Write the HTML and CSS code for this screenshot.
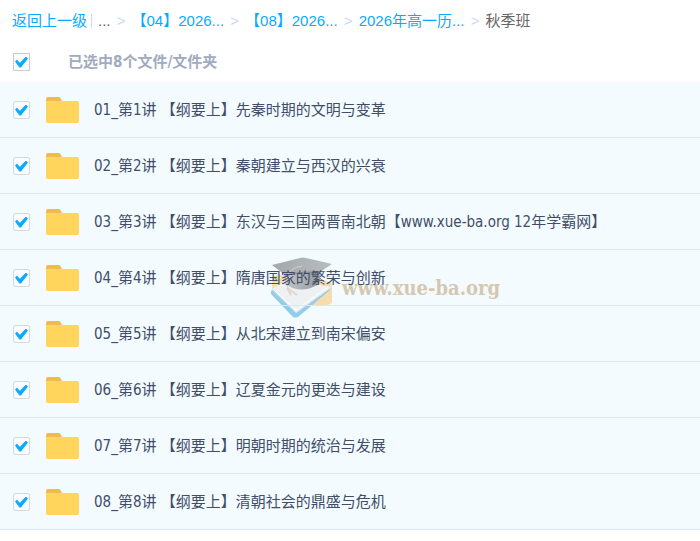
FILE: index.html
```
<!DOCTYPE html>
<html lang="zh-CN">
<head>
    <meta charset="UTF-8">
    <meta name="viewport" content="width=device-width, initial-scale=1.0">
    <title>秋季班</title>
    <link rel="stylesheet" href="styles.css">
</head>
<body>
    <nav class="breadcrumb">
        <a href="#">返回上一级</a>
        <span class="divider"></span>
        <span class="dots">...</span>
        <span class="sep">&gt;</span>
        <a href="#">【04】2026...</a>
        <span class="sep">&gt;</span>
        <a href="#">【08】2026...</a>
        <span class="sep">&gt;</span>
        <a href="#">2026年高一历...</a>
        <span class="sep">&gt;</span>
        <span class="current">秋季班</span>
    </nav>

    <div class="list-header">
        <input type="checkbox" class="check" id="checkAll" checked>
        <label for="checkAll">已选中8个文件/文件夹</label>
    </div>

    <!-- folder shape shared by all rows -->
    <svg class="sprite" width="0" height="0" aria-hidden="true">
        <symbol id="folder" viewBox="0 0 33 26">
            <path d="M0 7V2Q0 0 2 0H12.500Q14 0 14.700 1.500L16 4V8H0Z" fill="#edbd4b"/>
            <path d="M0 4H31Q33 4 33 6V24Q33 26 31 26H2Q0 26 0 24Z" fill="#ffd55b"/>
        </symbol>
    </svg>

    <div class="list-wrap">
        <ul class="file-list">
            <li class="row">
                <input type="checkbox" class="check" id="f1" checked>
                <svg class="folder" aria-hidden="true"><use href="#folder"/></svg>
                <label for="f1">01_第1讲 【纲要上】先秦时期的文明与变革</label>
            </li>
            <li class="row">
                <input type="checkbox" class="check" id="f2" checked>
                <svg class="folder" aria-hidden="true"><use href="#folder"/></svg>
                <label for="f2">02_第2讲 【纲要上】秦朝建立与西汉的兴衰</label>
            </li>
            <li class="row">
                <input type="checkbox" class="check" id="f3" checked>
                <svg class="folder" aria-hidden="true"><use href="#folder"/></svg>
                <label for="f3">03_第3讲 【纲要上】东汉与三国两晋南北朝【www.xue-ba.org 12年学霸网】</label>
            </li>
            <li class="row">
                <input type="checkbox" class="check" id="f4" checked>
                <svg class="folder" aria-hidden="true"><use href="#folder"/></svg>
                <label for="f4">04_第4讲 【纲要上】隋唐国家的繁荣与创新</label>
            </li>
            <li class="row">
                <input type="checkbox" class="check" id="f5" checked>
                <svg class="folder" aria-hidden="true"><use href="#folder"/></svg>
                <label for="f5">05_第5讲 【纲要上】从北宋建立到南宋偏安</label>
            </li>
            <li class="row">
                <input type="checkbox" class="check" id="f6" checked>
                <svg class="folder" aria-hidden="true"><use href="#folder"/></svg>
                <label for="f6">06_第6讲 【纲要上】辽夏金元的更迭与建设</label>
            </li>
            <li class="row">
                <input type="checkbox" class="check" id="f7" checked>
                <svg class="folder" aria-hidden="true"><use href="#folder"/></svg>
                <label for="f7">07_第7讲 【纲要上】明朝时期的统治与发展</label>
            </li>
            <li class="row">
                <input type="checkbox" class="check" id="f8" checked>
                <svg class="folder" aria-hidden="true"><use href="#folder"/></svg>
                <label for="f8">08_第8讲 【纲要上】清朝社会的鼎盛与危机</label>
            </li>
        </ul>

        <div class="watermark">
            <svg width="62" height="62" viewBox="0 0 62 62" aria-hidden="true">
                <defs>
                    <linearGradient id="cap" x1="0" y1="0" x2="1" y2="0">
                        <stop offset="0" stop-color="#a4a8ab"/>
                        <stop offset="1" stop-color="#b9bcbf"/>
                    </linearGradient>
                    <linearGradient id="band" x1="0" y1="0" x2="1" y2="0">
                        <stop offset="0" stop-color="#c6c9cb"/>
                        <stop offset="1" stop-color="#95999e"/>
                    </linearGradient>
                </defs>
                <!-- orange book -->
                <path d="M1 22Q2 18 8 18L50 22L60 26Q61 27 61 29V45Q60 48 54 48H36L1 32Z" fill="#f6dcae"/>
                <!-- open book with blue cover -->
                <path d="M0 34L14 26L59 33L27 60Q25 61 22 60L0 37Z" fill="#8fcdec"/>
                <path d="M1 32L15 23L61 30L25 56Z" fill="#eef1f3"/>
                <path d="M1 33L25 56L60 31" fill="none" stroke="#cfd5d9"/>
                <path d="M4 34L25 53L57 30" fill="none" stroke="#fff"/>
                <!-- cap -->
                <path d="M12 13L14 27Q30 38 48 27L49 12Z" fill="url(#band)"/>
                <path d="M1 8L29 1Q32 0 35 1L61 7L49 15Q32 14 14 18Z" fill="url(#cap)"/>
                <path d="M14 18Q32 14 49 15" fill="none" stroke="#7f858a"/>
                <path d="M31 9Q18 11 16 20Q14 28 19 34" fill="none" stroke="#d5d1c4"/>
                <path d="M18 32L26 38M16 31L20 38" stroke="#ddd9cb" stroke-width="2"/>
            </svg>
            <span>www.xue-ba.org</span>
        </div>
    </div>
</body>
</html>
```
FILE: styles.css
```
body {
    margin: 0;
    background: #fff;
    color: #424e67;
    font-family: "DejaVu Sans Condensed", "Noto Sans CJK SC", sans-serif;
    font-size: 15px;
    line-height: 20px;
}
.breadcrumb {
    display: flex;
    align-items: center;
    height: 41px;
    padding: 0 12px;
    font-family: "Liberation Sans", "Noto Sans CJK SC", sans-serif;
    white-space: nowrap;
}
.breadcrumb a {
    color: #09aaff;
    text-decoration: none;
}
.divider {
    width: 1px;
    height: 14px;
    margin: 0 6px 0 4px;
    background: #c4dbfe;
}
.dots,
.current {
    color: #666;
}
.sep {
    width: 21px;
    text-align: center;
    color: #c4dbfe;
}
.list-header {
    display: flex;
    align-items: center;
    gap: 38px;
    height: 41px;
    padding: 0 13px;
    color: #a1abbf;
    font-weight: bold;
}
.check {
    appearance: none;
    flex: none;
    box-sizing: border-box;
    width: 17px;
    height: 18px;
    margin: 0;
    border: 1px solid #d0d9e4;
    border-radius: 2px;
    background: #fafcff;
}
.list-header .check {
    border-color: #ccc;
    border-radius: 0;
}
.check:checked::before {
    content: "";
    display: block;
    width: 13px;
    height: 11px;
    margin: 3px 1px;
    background: #09aaff;
    clip-path: polygon(0 46%, 14% 30%, 38% 56%, 84% 0, 100% 18%, 46% 100%, 34% 100%);
}
.list-wrap {
    position: relative;
    z-index: 0;
    background: #f3fbff;
}
.file-list {
    margin: 0;
    padding: 0;
    list-style: none;
}
.row {
    display: flex;
    align-items: center;
    box-sizing: border-box;
    height: 56px;
    padding: 0 13px;
    border-bottom: 1px solid #d9e8f9;
}
.folder {
    flex: none;
    width: 33px;
    height: 26px;
    margin: 0 15px 0 16px;
}
.sprite {
    position: absolute;
}
/* sits behind the row text */
.watermark {
    position: absolute;
    z-index: -1;
    top: 175px;
    left: 271px;
    display: flex;
    align-items: center;
    gap: 9px;
    color: #d5c8b0;
    font-family: "DejaVu Serif Condensed", "DejaVu Serif", serif;
    font-size: 20px;
    font-weight: bold;
}
```
